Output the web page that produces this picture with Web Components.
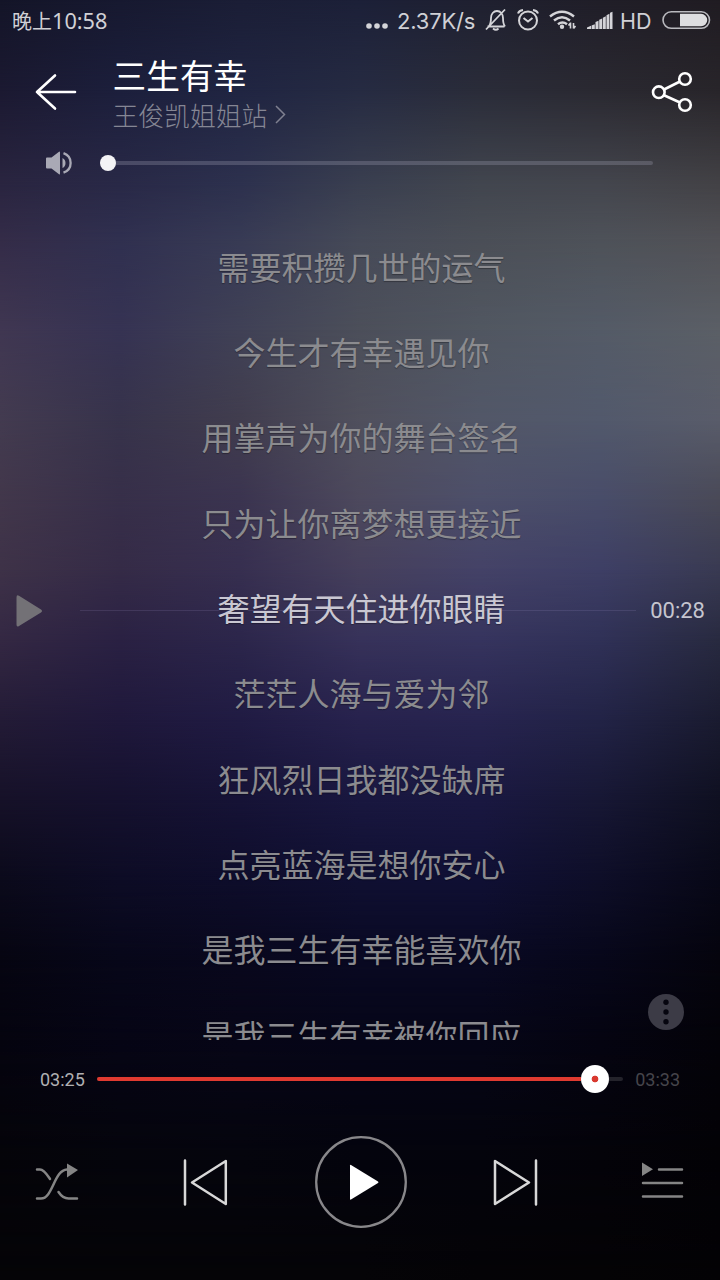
<!DOCTYPE html>
<html lang="zh-CN">
<head>
<meta charset="utf-8">
<title>三生有幸</title>
<style>
html, body { margin: 0; height: 100%; background: #040308; }
body { font-family: Roboto, "Noto Sans CJK SC", sans-serif; overflow: hidden; }
</style>
</head>
<body>
<music-player>
  <status-bar slot="status" period="晚上" time="10:58" speed="2.37K/s"></status-bar>
  <song-header slot="header"><span slot="title">三生有幸</span><span slot="artist">王俊凯姐姐站</span></song-header>
  <volume-bar slot="volume"></volume-bar>
  <lyric-view slot="lyrics" time="00:28">
    <lyric-line>需要积攒几世的运气</lyric-line>
    <lyric-line>今生才有幸遇见你</lyric-line>
    <lyric-line>用掌声为你的舞台签名</lyric-line>
    <lyric-line>只为让你离梦想更接近</lyric-line>
    <lyric-line active>奢望有天住进你眼睛</lyric-line>
    <lyric-line>茫茫人海与爱为邻</lyric-line>
    <lyric-line>狂风烈日我都没缺席</lyric-line>
    <lyric-line>点亮蓝海是想你安心</lyric-line>
    <lyric-line>是我三生有幸能喜欢你</lyric-line>
    <lyric-line>是我三生有幸被你回应</lyric-line>
  </lyric-view>
  <seek-bar slot="seek" elapsed="03:25" total="03:33"></seek-bar>
  <play-controls slot="controls"></play-controls>
</music-player>

<script>
const define = (name, html, setup) => {
  const tpl = document.createElement('template');
  tpl.innerHTML = html;
  customElements.define(name, class extends HTMLElement {
    constructor() {
      super();
      this.attachShadow({ mode: 'open' }).append(tpl.content.cloneNode(true));
    }
    connectedCallback() { if (setup) setup(this, this.shadowRoot); }
  });
};

/* Blurred artwork: horizontal colour ramps, each one fading in over the one above it. */
const ramps = [
  [0,    '#141528', '#171930', '#1b1e36', '#1c2038', '#1f2030', '#201e28', '#201c22'],
  [90,   '#1b1931', '#1c1f3c', '#202542', '#262b42', '#2a2c39', '#2a2931', '#28252a'],
  [185,  '#2a2540', '#292947', '#2d314e', '#3a3f50', '#42464f', '#44464e', '#434246'],
  [240,  '#342c48', '#303050', '#383b55', '#464a58', '#4b4f57', '#4e5259', '#515156'],
  [330,  '#403752', '#363353', '#404156', '#4c4f5a', '#515761', '#545b67', '#5b5f66'],
  [420,  '#433b50', '#37334b', '#413d4e', '#50505d', '#525768', '#52596c', '#595c6a'],
  [500,  '#42374b', '#372f49', '#3b3450', '#4d495d', '#4d4f6a', '#484c69', '#494957'],
  [570,  '#3e3248', '#352b47', '#372f50', '#46405c', '#444267', '#3e3f65', '#393a52'],
  [640,  '#342843', '#2a2143', '#2c264b', '#37325a', '#36345e', '#303157', '#282a40'],
  [720,  '#231b36', '#1f183b', '#201b43', '#27224d', '#27244f', '#222346', '#1a1b30'],
  [800,  '#161128', '#15112e', '#161336', '#19173f', '#1a1841', '#171734', '#0f1021'],
  [880,  '#0b0a1b', '#0d0c25', '#0e0d2b', '#101032', '#101034', '#0e0e28', '#080817'],
  [960,  '#060511', '#070719', '#09081d', '#090922', '#090922', '#07071a', '#05040d'],
  [1040, '#05040f', '#060515', '#070617', '#060618', '#060617', '#050411', '#040309'],
  [1160, '#050409', '#05050c', '#05050d', '#04040d', '#04040c', '#040309', '#030206'],
  [1280, '#050407', '#050407', '#050407', '#050407', '#040306', '#040305', '#030205']
];
define('blur-backdrop', `
<style>
:host { display: grid; }
div { grid-area: 1 / 1; }
</style>`, (el, root) => {
  ramps.forEach(([y, ...c], i) => {
    const d = document.createElement('div');
    d.style.background = `linear-gradient(90deg, ${c.join(',')})`;
    if (i) d.style.maskImage = `linear-gradient(180deg, transparent ${ramps[i - 1][0]}px, #000 ${y}px)`;
    root.append(d);
  });
});

define('music-player', `
<style>
:host { display: grid; width: 720px; height: 1280px; overflow: hidden; }
blur-backdrop, main { grid-area: 1 / 1; }
main { display: flex; flex-direction: column; min-height: 0; z-index: 1; }
</style>
<blur-backdrop></blur-backdrop>
<main>
  <slot name="status"></slot><slot name="header"></slot><slot name="volume"></slot>
  <slot name="lyrics"></slot><slot name="seek"></slot><slot name="controls"></slot>
</main>`);

define('status-bar', `
<style>
:host { display: flex; align-items: center; height: 40px; padding: 0 9px 0 12px; box-sizing: border-box; color: #d0d0d5; line-height: 42px; }
.clock { flex: 1; display: flex; align-items: baseline; white-space: nowrap; padding-top: 2px; }
.period { font-family: "Noto Sans CJK SC", sans-serif; font-size: 20px; line-height: 42px; }
.time { font-family: "Noto Sans", sans-serif; font-size: 21.700px; line-height: 42px; }
svg { display: block; flex: none; }
.speed, .hd { font-family: Inter, sans-serif; font-size: 22px; white-space: nowrap; padding-top: 2px; }
.speed { width: 78px; margin-left: 9px; letter-spacing: -.2px; }
.hd { width: 33px; margin-left: 7px; font-size: 21.500px; }
</style>
<div class="clock"><span class="period"></span><span class="time"></span></div>
<svg width="22" height="40" fill="#d4d4d8"><circle cx="3" cy="26" r="2.800"/><circle cx="11" cy="26" r="2.800"/><circle cx="19" cy="26" r="2.800"/></svg>
<span class="speed"></span>
<svg style="margin-left:9px" width="24" height="40" fill="none" stroke="#d4d4d8" stroke-width="1.800"><path d="M3.500 26.500h17M5 26c2-2.500 2-5 2-8 0-4 2.500-7 6-7s6 3 6 7c0 3 0 6 2 8.500M2 29.500 21 9.500"/><path d="M9 28.500q3 2.500 5.500 0"/></svg>
<svg style="margin-left:8px" width="24" height="40" fill="none" stroke="#d4d4d8" stroke-width="2"><circle cx="12" cy="20.500" r="9"/><path d="M7.500 18 12 21.500l4.500-3.500M2 13.500Q3 10.500 7 10M17 10q4 .5 5 3.500"/></svg>
<svg style="margin-left:9px" width="29" height="40" fill="none" stroke="#d4d4d8" stroke-width="2.500"><path d="M1 16.500q12-9.500 24 0M5 20.500q8-6.500 16 0M9 24.200q4.500-3.500 9 0"/><circle cx="13" cy="26.800" r="2.200" fill="#d4d4d8" stroke="none"/><path d="M21.500 22.500v6M24.500 23v5.500M19.500 25.500l2-2.500M24.500 28.500l2-2.500" stroke-width="1.600"/></svg>
<svg style="margin-left:9px" width="26" height="40" fill="#d4d4d8"><path d="M0 29v-1.500l4-1.700V29zM4.600 29v-3.500l3.200-1.200V29zM8.500 29v-7l3-1.200V29zM12.200 29v-9.300l3-1.200V29zM15.900 29V17.700l2.900-1.500V29zM19.500 29V15.200l2.900-1.400V29zM23 29V12.700l2.500-1V29z"/></svg>
<span class="hd">HD</span>
<svg style="margin-left:9px" width="49" height="40"><rect x="1" y="11.800" width="46.500" height="16.500" rx="8.200" fill="none" stroke="#b9b9be" stroke-width="1.600"/><path d="M18 13.800h21a6.200 6.200 0 0 1 0 12.500H18z" fill="#dedee0"/></svg>`,
(el, root) => {
  for (const k of ['period', 'time', 'speed']) root.querySelector('.' + k).textContent = el.getAttribute(k);
});

define('song-header', `
<style>
:host { display: flex; height: 96px; padding: 0 24px 0 32px; box-sizing: border-box; font-family: "Noto Sans CJK SC", sans-serif; }
svg { display: block; }
.names { flex: 1; padding: 14px 0 0 80.500px; margin-left: -48px; display: flex; flex-direction: column; }
.title { font-size: 33.700px; line-height: 42px; color: #fff; }
.artist { display: flex; align-items: center; gap: 6px; font-size: 25.800px; font-weight: 300; line-height: 38px; color: #858694; }
</style>
<svg width="48" height="96" fill="none" stroke="#fff" stroke-width="2.600" stroke-linecap="round" stroke-linejoin="round"><path d="M43 52H5M23 35.500 5 52l18 16.500"/></svg>
<div class="names">
  <div class="title"><slot name="title"></slot></div>
  <div class="artist"><slot name="artist"></slot><svg width="14" height="20" fill="none" stroke="#7f8090" stroke-width="1.500"><path d="m3 1 8.500 8.500L3 18"/></svg></div>
</div>
<svg width="48" height="96" fill="none" stroke="#fff" stroke-width="2.600"><circle cx="10.800" cy="52.200" r="5.800"/><circle cx="37" cy="39" r="5.800"/><circle cx="37" cy="65" r="5.800"/><path d="m16 49.500 16-8M16 55.200l16 7.300"/></svg>`);

define('volume-bar', `
<style>
:host { display: flex; align-items: center; height: 53px; padding: 0 67px 0 45px; box-sizing: border-box; }
svg { display: block; flex: none; }
.track { flex: 1; margin-left: 27px; height: 4px; border-radius: 2px; background: rgba(160,160,180,.3); display: flex; align-items: center; }
.knob { width: 16px; height: 16px; border-radius: 50%; background: #f3f3f5; }
</style>
<svg width="28" height="28"><path d="M2 8.500h4.500L14 2.700q1-.7 1 .8v21q0 1.500-1 .8L6.500 19.500H2q-1 0-1-1v-9q0-1 1-1z" fill="#a9a9b5"/><path d="M17.500 9q3 1.500 3 5t-3 5z" fill="#a9a9b5"/><path d="M18.500 4.200c9.500 3.500 9.500 16 0 19.500" fill="none" stroke="#a9a9b5" stroke-width="2.300"/></svg>
<div class="track"><div class="knob"></div></div>`);

define('lyric-line', `
<style>
:host { display: block; flex: none; height: 85.330px; font: 400 32px/85.330px "Noto Sans CJK SC", sans-serif; text-align: center; color: #8b8b8f; text-shadow: 0 1px 1px rgba(0,0,0,.3); }
:host([active]) { color: #c9c7d2; }
</style><slot></slot>`);

define('lyric-view', `
<style>
:host { display: grid; height: 851px; box-sizing: border-box; }
.lines, .cursor, .more { grid-area: 1 / 1; }
.lines { display: flex; flex-direction: column; padding: 34.800px 0 0 3px; min-height: 0; height: 851px; box-sizing: border-box; overflow: hidden; z-index: 1; }
.cursor { align-self: start; display: flex; align-items: center; height: 40px; margin-top: 401.500px; padding: 0 15px 0 15px; }
.rule { flex: 1; height: 1px; margin: 0 14px 0 37px; background: rgba(160,150,200,.17); }
.time { font-size: 22px; line-height: 40px; padding-top: 1px; color: #c5c5cf; }
.more { align-self: end; justify-self: end; margin: 0 36px 10px 0; z-index: 2; }
svg { display: block; }
</style>
<div class="lines"><slot></slot></div>
<div class="cursor">
  <svg width="28" height="34" fill="#737176"><path d="M1.500 3.500Q1.500 .2 4 1.800L26 15.500q2 1.500 0 3L4 32Q1.500 33.500 1.500 30.500z"/></svg>
  <div class="rule"></div><span class="time"></span>
</div>
<svg class="more" width="36" height="36"><circle cx="18" cy="18" r="18" fill="#3c3b46"/><g fill="#06050f"><circle cx="18" cy="8.300" r="2.700"/><circle cx="18" cy="18" r="2.700"/><circle cx="18" cy="27.700" r="2.700"/></g></svg>`,
(el, root) => { root.querySelector('.time').textContent = el.getAttribute('time'); });

define('seek-bar', `
<style>
:host { display: flex; align-items: center; height: 79px; padding: 0 40px; box-sizing: border-box; font-size: 18px; color: #b0b0b3; }
.track { flex: 1; display: flex; align-items: center; height: 4px; margin: 0 12px 1px; border-radius: 2px; background: #24232b; }
.played { width: 484.500px; height: 4px; border-radius: 2px 0 0 2px; background: #e03a30; }
.knob { width: 28px; height: 28px; border-radius: 50%; background: radial-gradient(circle, #d9392f 3px, #fff 3.700px); }
.total { color: #46454b; }
</style>
<span class="elapsed"></span>
<div class="track"><div class="played"></div><div class="knob"></div></div>
<span class="total"></span>`,
(el, root) => {
  root.querySelector('.elapsed').textContent = el.getAttribute('elapsed');
  root.querySelector('.total').textContent = el.getAttribute('total');
});

define('play-controls', `
<style>
:host { display: flex; align-items: center; justify-content: space-between; height: 126px; padding: 0 35px 0 33px; box-sizing: border-box; }
svg { display: block; }
</style>
<svg width="46" height="50" fill="none" stroke="#858585" stroke-width="2.500" stroke-linecap="round"><path d="M4 12.500h3c4 0 7 5 10 9.500M4 41.500h4C20 41.500 21 13 34 12.500M25.500 35c3 4.500 6 6.500 10 6.500H44"/><path d="M34 6.500V20.500L45 13z" fill="#858585" stroke="none"/></svg>
<svg width="50" height="50" fill="none" stroke="#d8d8d8" stroke-width="2.500" stroke-linecap="round" stroke-linejoin="round" style="margin-left:57px"><path d="M6 3.500v44M46.800 4v43L13 25.500z"/></svg>
<svg width="92" height="92" style="margin:0 41px 0 42px"><circle cx="46" cy="46" r="44.800" fill="none" stroke="#88878a" stroke-width="2.300"/><path d="M35 29.500q0-1 1-.5l27 16.500q1 .7 0 1.500L36 63.500q-1 .5-1-.5z" fill="#fff"/></svg>
<svg width="50" height="50" fill="none" stroke="#d8d8d8" stroke-width="2.500" stroke-linecap="round" stroke-linejoin="round" style="margin-right:55px"><path d="M45 3.500v44M4 4v43l34-21.500z"/></svg>
<svg width="46" height="50" fill="none" stroke="#858585" stroke-width="2.500" stroke-linecap="round"><path d="M20 12.500h23M4 26h39M4 39.500h39"/><path d="M3 5.500V19l11-6.700z" fill="#858585" stroke="none"/></svg>`);
customElements.whenDefined('music-player');
</script>
</body>
</html>
